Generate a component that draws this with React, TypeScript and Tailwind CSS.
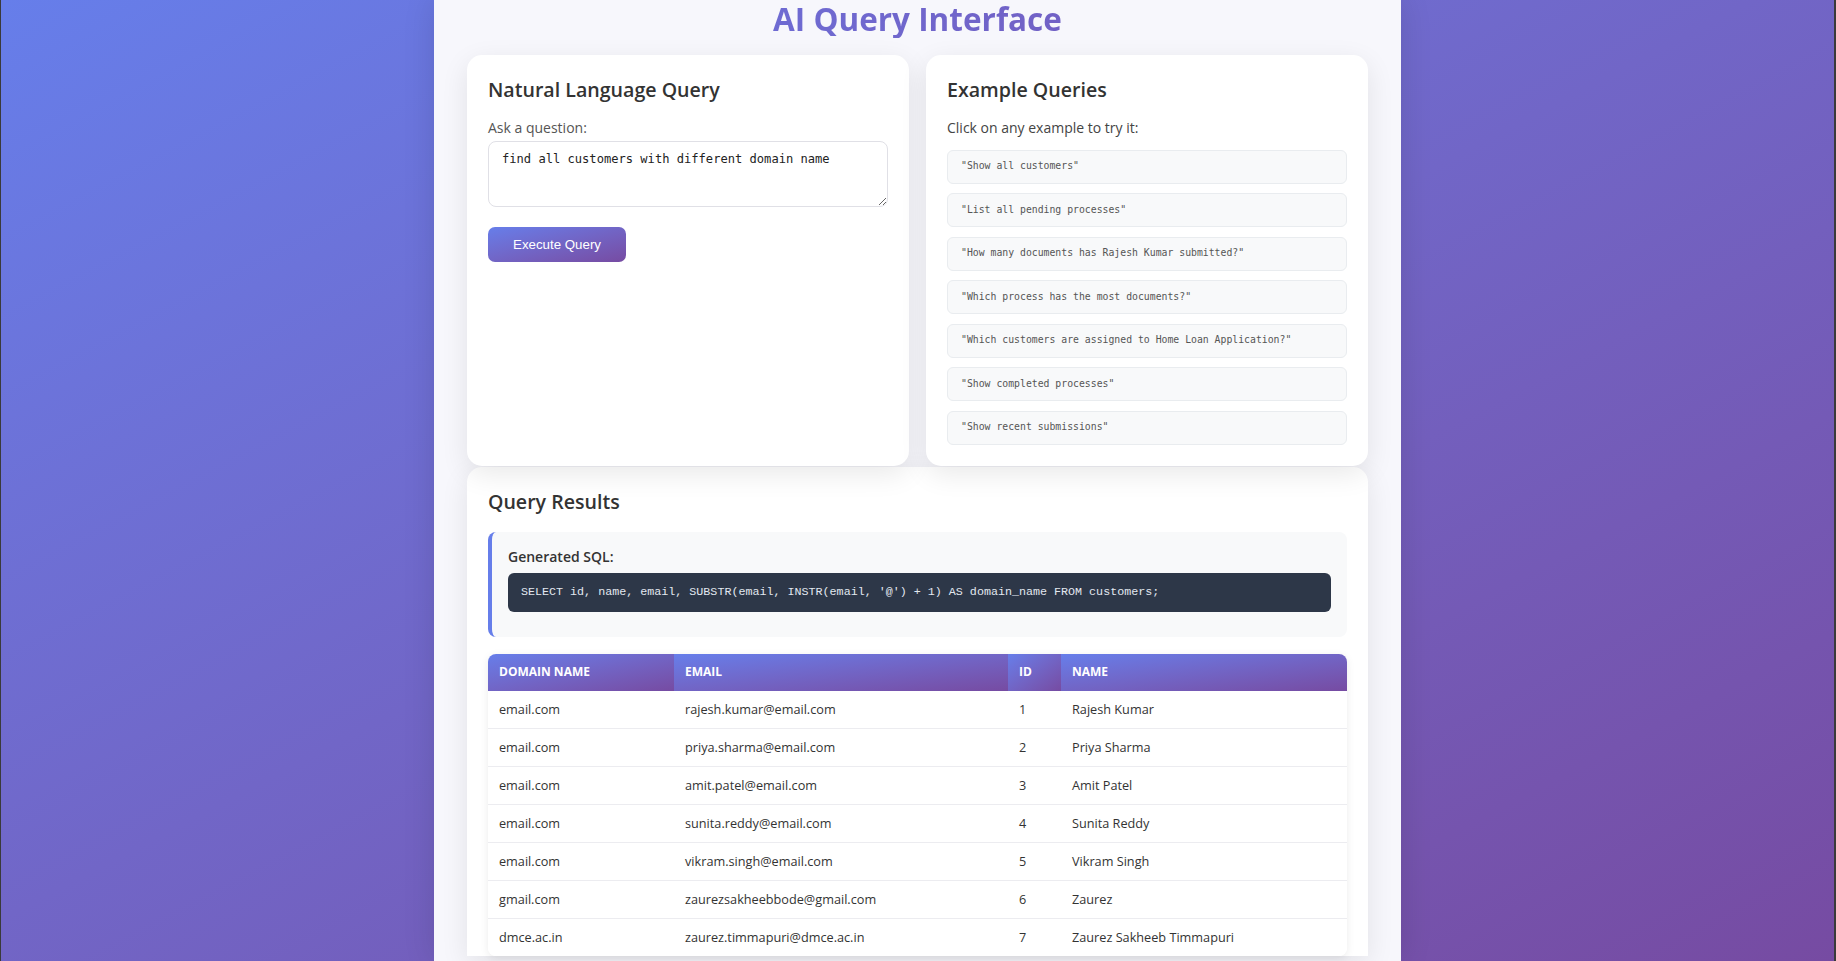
import React from "react";

const examples = [
  '"Show all customers"',
  '"List all pending processes"',
  '"How many documents has Rajesh Kumar submitted?"',
  '"Which process has the most documents?"',
  '"Which customers are assigned to Home Loan Application?"',
  '"Show completed processes"',
  '"Show recent submissions"',
];

const rows = [
  { domain: "email.com", email: "rajesh.kumar@email.com", id: 1, name: "Rajesh Kumar" },
  { domain: "email.com", email: "priya.sharma@email.com", id: 2, name: "Priya Sharma" },
  { domain: "email.com", email: "amit.patel@email.com", id: 3, name: "Amit Patel" },
  { domain: "email.com", email: "sunita.reddy@email.com", id: 4, name: "Sunita Reddy" },
  { domain: "email.com", email: "vikram.singh@email.com", id: 5, name: "Vikram Singh" },
  { domain: "gmail.com", email: "zaurezsakheebbode@gmail.com", id: 6, name: "Zaurez" },
  { domain: "dmce.ac.in", email: "zaurez.timmapuri@dmce.ac.in", id: 7, name: "Zaurez Sakheeb Timmapuri" },
];

const columns = [
  { label: "Domain Name", width: "w-[186px]" },
  { label: "Email", width: "w-[334px]" },
  { label: "ID", width: "w-[53px]" },
  { label: "Name", width: "" },
];

const sql =
  "SELECT id, name, email, SUBSTR(email, INSTR(email, '@') + 1) AS domain_name FROM customers;";

const Card = ({ title, children, className = "" }: { title: string; children: React.ReactNode; className?: string }) => (
  <div className={`bg-white rounded-[15px] p-[21px] shadow-[0_8px_28px_rgba(0,0,0,0.09)] ${className}`}>
    <h2 className="text-[19.6px] leading-[28px] font-semibold text-[#333] mb-[14px]">{title}</h2>
    {children}
  </div>
);

export default function App() {
  return (
    <div
      className="h-[961px] overflow-hidden bg-gradient-to-br from-[#667eea] to-[#764ba2] border-l border-r-2 border-[#3a3a3a]"
      style={{ fontFamily: '"Open Sans", "Noto Sans", sans-serif' }}
    >
      <div className="w-[967px] h-full ml-[433px] bg-[#f7f7fc] px-[33px] shadow-[0_0_30px_rgba(0,0,0,0.12)]">
        <h1 className="text-center text-[31.5px] leading-[38px] font-bold bg-gradient-to-r from-[#6a74e0] to-[#7458b8] bg-clip-text text-transparent mb-[17px]">
          AI Query Interface
        </h1>

        <div className="grid grid-cols-2 gap-[17px]">
          <Card title="Natural Language Query">
            <label className="block text-[14px] leading-[20px] text-[#555] mb-[3px]">Ask a question:</label>
            <textarea
              className="block w-full h-[66px] rounded-[8px] border border-[#e0e0e6] px-[13px] py-[8px] text-[12.1px] text-[#222] resize-y outline-none"
              style={{ fontFamily: '"DejaVu Sans Mono", monospace' }}
              defaultValue="find all customers with different domain name"
            />
            <button
              className="mt-[20px] h-[35px] w-[138px] rounded-[7px] bg-gradient-to-br from-[#667eea] to-[#764ba2] text-white text-[13.3px]"
              style={{ fontFamily: '"Liberation Sans", Arial, sans-serif' }}
            >
              Execute Query
            </button>
          </Card>

          <Card title="Example Queries">
            <p className="text-[14px] leading-[20px] text-[#444] mb-[11.5px]">Click on any example to try it:</p>
            <div className="flex flex-col gap-[9.5px]">
              {examples.map((ex) => (
                <div
                  key={ex}
                  className="h-[34px] flex items-center px-[13px] rounded-[6px] bg-[#f8f9fa] border border-[#e9ecef] text-[9.8px] text-[#555]"
                  style={{ fontFamily: '"DejaVu Sans Mono", monospace' }}
                >
                  {ex}
                </div>
              ))}
            </div>
          </Card>
        </div>

        <Card title="Query Results" className="mt-[1px] rounded-b-none pb-0">
          <div className="bg-[#f8f9fa] rounded-[8px] border-l-4 border-[#667eea] pl-[16px] pr-[16px] pt-[14px] pb-[25px] mt-[16px]">
            <div className="text-[14px] leading-[22px] font-semibold text-[#333] mb-[5px]">Generated SQL:</div>
            <pre
              className="bg-[#2d3748] text-[#e2e8f0] rounded-[6px] px-[13px] py-[11px] text-[11.7px] leading-[17px]"
              style={{ fontFamily: '"Liberation Mono", monospace' }}
            >
              {sql}
            </pre>
          </div>

          <div className="mt-[17px] rounded-[8px] overflow-hidden shadow-[0_2px_8px_rgba(0,0,0,0.08)]">
            <table className="w-full border-collapse text-[12.7px]">
              <thead>
                <tr>
                  {columns.map((c) => (
                    <th
                      key={c.label}
                      className={`${c.width} h-[37px] px-[11px] text-left uppercase font-bold text-[12px] text-white bg-gradient-to-br from-[#667eea] to-[#764ba2]`}
                    >
                      {c.label}
                    </th>
                  ))}
                </tr>
              </thead>
              <tbody className="bg-white text-[#333]">
                {rows.map((r) => (
                  <tr key={r.id} className="border-b border-[#ececf0] last:border-b-0">
                    <td className="px-[11px] py-[10px] leading-[17px]">{r.domain}</td>
                    <td className="px-[11px] py-[10px] leading-[17px]">{r.email}</td>
                    <td className="px-[11px] py-[10px] leading-[17px]">{r.id}</td>
                    <td className="px-[11px] py-[10px] leading-[17px]">{r.name}</td>
                  </tr>
                ))}
              </tbody>
            </table>
          </div>
        </Card>
      </div>
    </div>
  );
}
